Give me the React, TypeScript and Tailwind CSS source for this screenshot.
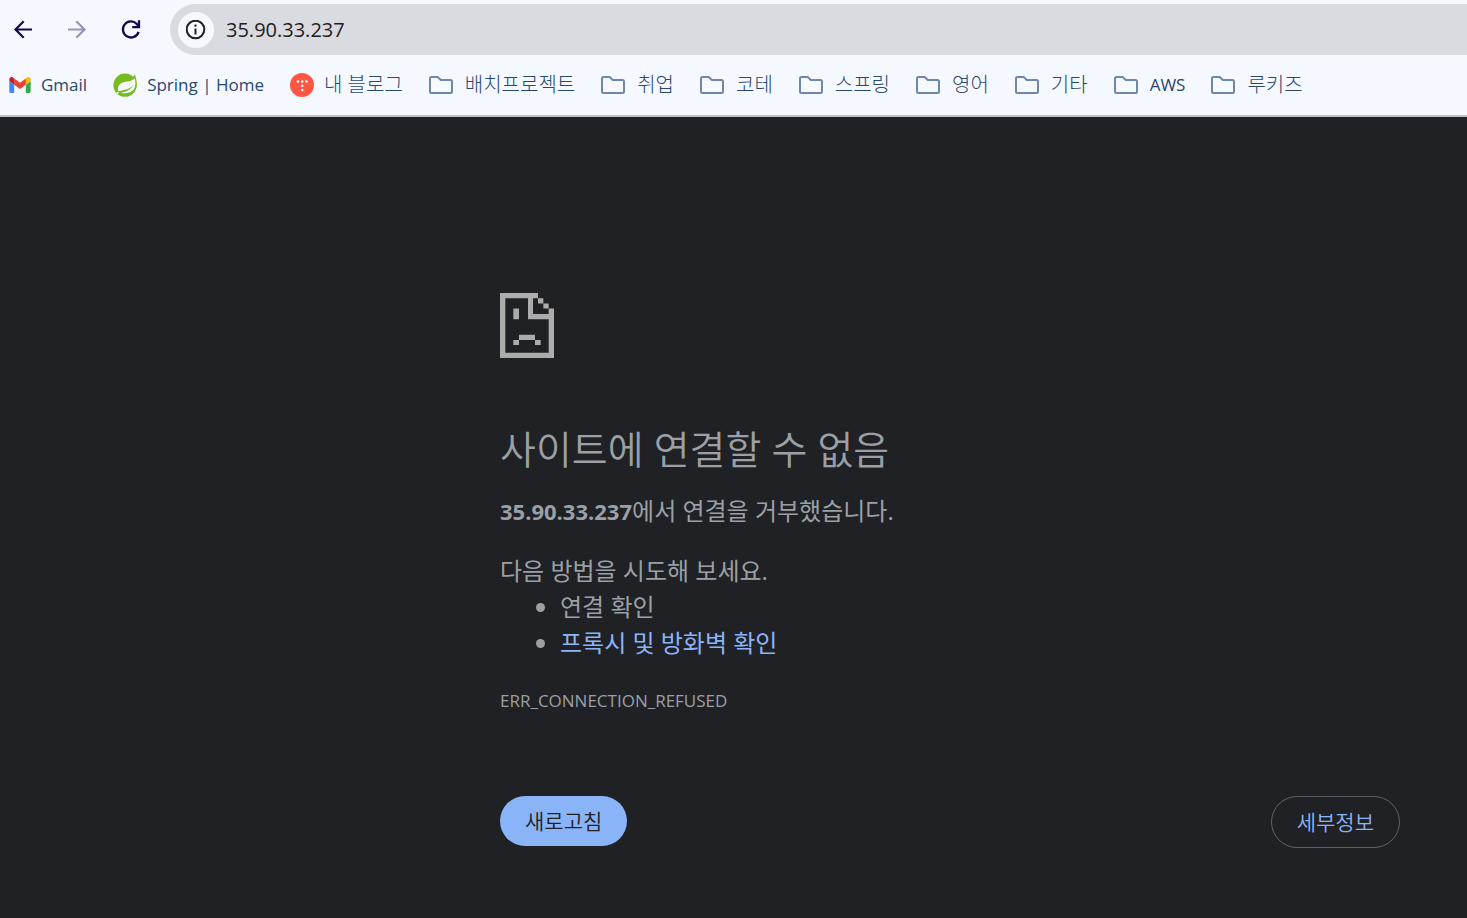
import React from "react";

const folders = ["배치프로젝트", "취업", "코테", "스프링", "영어", "기타", "AWS", "루키즈"];

function BackIcon() {
  return (
    <svg width="20" height="20" viewBox="0 0 20 20" fill="none" stroke="currentColor" strokeWidth="2.2">
      <path d="M19 9.500H2.500M10.700 1.300 2.500 9.500l8.200 8.200" />
    </svg>
  );
}

function ForwardIcon() {
  return (
    <svg width="20" height="20" viewBox="0 0 20 20" fill="none" stroke="currentColor" strokeWidth="2.2">
      <path d="M1 9.500h16.500M9.300 1.300l8.200 8.200-8.200 8.200" />
    </svg>
  );
}

function ReloadIcon() {
  return (
    <svg width="20" height="20" viewBox="0 0 20 20" fill="none" stroke="currentColor" strokeWidth="2.3">
      <path d="M17.600 11.800A8 8 0 1 1 15.800 4l1.700 2" />
      <path d="M18 .3V7.100H11.200" />
    </svg>
  );
}

function InfoIcon() {
  return (
    <svg width="20" height="20" viewBox="0 0 20 20" fill="none" stroke="#1f2023" strokeWidth="2">
      <circle cx="9.500" cy="9.500" r="8.800" />
      <path d="M9.500 8.500v6M9.500 4.500v2.200" />
    </svg>
  );
}

function GmailIcon() {
  return (
    <svg width="22" height="16" viewBox="52 42 88 66">
      <path fill="#4285f4" d="M58 108h14V74L52 59v43c0 3.320 2.690 6 6 6" />
      <path fill="#34a853" d="M120 108h14c3.320 0 6-2.690 6-6V59l-20 15" />
      <path fill="#fbbc04" d="M120 48v26l20-15v-8c0-7.420-8.470-11.650-14.400-7.200" />
      <path fill="#ea4335" d="M72 74V48l24 18 24-18v26L96 92" />
      <path fill="#c5221f" d="M52 51v8l20 15V48l-5.600-4.200c-5.940-4.450-14.400-.22-14.400 7.200" />
    </svg>
  );
}

function SpringIcon() {
  return (
    <svg width="24" height="24" viewBox="0 0 24 24">
      <circle cx="12" cy="12.200" r="11.600" fill="#77bc1f" />
      <path fill="#77bc1f" d="M21.800 1.200c-.6 1.300-1.400 2.400-2.400 3.400l3.900 10.400c1-4.300.2-9.200-1.500-13.800Z" />
      <path
        fill="#f5f8fe"
        d="M21.700 5.200c.9 4 1.200 7.700-.7 10.700-2.800 4.200-8.500 4.700-14.600 4.200 6.200-.9 11.500-3.100 14.400-8.300-4.200 4.300-9 5.400-15.200 6.400-1.600-2.800-.2-6.800 3.500-8.500 4.300-1.900 9.200-.6 12.600-4.500Z"
      />
      <circle cx="4.700" cy="19.800" r="1" fill="#f5f8fe" />
    </svg>
  );
}

function BlogIcon() {
  return (
    <svg width="24" height="24" viewBox="0 0 24 24">
      <circle cx="12" cy="12" r="12" fill="#ff5544" />
      <g fill="#fff">
        <circle cx="7.900" cy="8.500" r="1.300" />
        <circle cx="12.200" cy="8.500" r="1.300" />
        <circle cx="16.500" cy="8.500" r="1.300" />
        <circle cx="12.200" cy="12.800" r="1.300" />
        <circle cx="12.200" cy="17" r="1.300" />
      </g>
    </svg>
  );
}

function FolderIcon() {
  return (
    <svg width="24" height="18" viewBox="0 0 24 18" fill="none" stroke="#7087a7" strokeWidth="2" strokeLinejoin="round">
      <path d="M2.500 1h6.200l3.100 3h9.700A1.500 1.500 0 0 1 23 5.500v10a1.500 1.500 0 0 1-1.500 1.500h-19A1.500 1.500 0 0 1 1 15.500v-13A1.500 1.500 0 0 1 2.500 1Z" />
    </svg>
  );
}

function SadPageIcon() {
  return (
    <svg width="54" height="65" viewBox="0 0 162 196" preserveAspectRatio="none" fill="#acacac">
      <path d="M0 0H114V16H99V63H146V47H162V196H0ZM16 16V180H146V79H84V16Z" fillRule="evenodd" />
      <path d="M114 16h16v16h16v15h-16V32h-16ZM40 47h17v32H40ZM57 126h48v16H57ZM40 142h17v15H40ZM105 142h17v15h-17Z" />
    </svg>
  );
}

function Bookmark({ icon, label, wide }: { icon: React.ReactNode; label: string; wide?: boolean }) {
  const latin = /^[A-Z]/.test(label);
  return (
    <a href="#" className={"flex shrink-0 items-center " + (wide ? "gap-3" : "gap-2.5")}>
      {icon}
      <span className={latin ? "text-[17px] leading-6" : "text-[20px] leading-6 font-light"}>{label}</span>
    </a>
  );
}

export default function App() {
  return (
    <div className="flex min-h-screen flex-col overflow-x-hidden bg-[#202124] font-['Open_Sans','Noto_Sans_CJK_KR',sans-serif]">
      <header className="border-b-2 border-[#bfc0d2] bg-[#f5f8fe]">
        <div className="flex items-center pt-1 pl-[13px]">
          <nav className="flex gap-[34px] pr-[29px] text-[#14084a]">
            <button aria-label="뒤로"><BackIcon /></button>
            <button aria-label="앞으로" disabled className="text-[#9994b7]"><ForwardIcon /></button>
            <button aria-label="새로고침"><ReloadIcon /></button>
          </nav>
          <div className="flex h-[51px] flex-1 items-center gap-3 rounded-l-full bg-[#dadbe0] pl-2">
            <button aria-label="사이트 정보" className="flex size-9 items-center justify-center rounded-full bg-[#f5f8fe]">
              <InfoIcon />
            </button>
            <input
              aria-label="주소"
              defaultValue="35.90.33.237"
              className="min-w-0 flex-1 bg-transparent text-[20px] text-[#1f2023] outline-none"
            />
          </div>
        </div>
        <nav className="flex h-15 items-center gap-[26px] pl-[9px] text-[#27486f]">
          <Bookmark icon={<GmailIcon />} label="Gmail" />
          <Bookmark icon={<SpringIcon />} label="Spring | Home" />
          <Bookmark icon={<BlogIcon />} label="내 블로그" />
          {folders.map((name) => (
            <Bookmark key={name} icon={<FolderIcon />} label={name} wide />
          ))}
        </nav>
      </header>

      <main className="mr-[67px] ml-auto w-full max-w-[900px] pt-44 text-[24px] leading-9 text-[#9aa0a6]">
        <SadPageIcon />
        <h1 className="mt-16 text-[39px] leading-[54px] font-[350]">사이트에 연결할 수 없음</h1>
        <p className="mt-[17px]">
          <strong className="text-[22px] font-bold">35.90.33.237</strong>에서 연결을 거부했습니다.
        </p>
        <p className="mt-6">다음 방법을 시도해 보세요.</p>
        <ul className="list-disc pl-15">
          <li>연결 확인</li>
          <li><a href="#" className="text-[#8ab4f8]">프록시 및 방화벽 확인</a></li>
        </ul>
        <p className="mt-6 text-[17px] leading-8">ERR_CONNECTION_REFUSED</p>
        <div className="mt-[79px] flex items-start justify-between text-[21px] leading-6 font-[350]">
          <button className="h-[50px] rounded-full bg-[#8ab4f8] px-[25px] text-[#202124]">새로고침</button>
          <button className="h-[52px] rounded-full border border-[#5f6368] px-[25px] text-[#8ab4f8]">세부정보</button>
        </div>
      </main>
    </div>
  );
}
